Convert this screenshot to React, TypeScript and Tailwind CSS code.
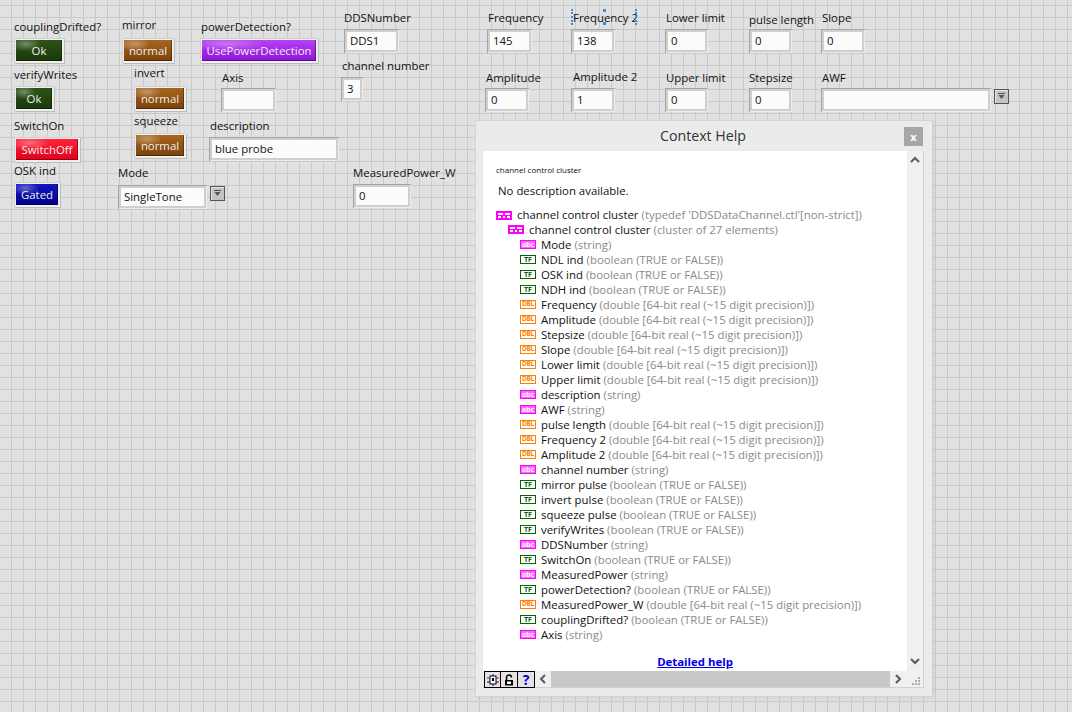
import React from "react";

type Kind = "abc" | "tf" | "dbl" | "cl";

const items: { name: string; kind: Kind; desc: string }[] = [
  { name: "Mode", kind: "abc", desc: "(string)" },
  { name: "NDL ind", kind: "tf", desc: "(boolean (TRUE or FALSE))" },
  { name: "OSK ind", kind: "tf", desc: "(boolean (TRUE or FALSE))" },
  { name: "NDH ind", kind: "tf", desc: "(boolean (TRUE or FALSE))" },
  { name: "Frequency", kind: "dbl", desc: "(double [64-bit real (~15 digit precision)])" },
  { name: "Amplitude", kind: "dbl", desc: "(double [64-bit real (~15 digit precision)])" },
  { name: "Stepsize", kind: "dbl", desc: "(double [64-bit real (~15 digit precision)])" },
  { name: "Slope", kind: "dbl", desc: "(double [64-bit real (~15 digit precision)])" },
  { name: "Lower limit", kind: "dbl", desc: "(double [64-bit real (~15 digit precision)])" },
  { name: "Upper limit", kind: "dbl", desc: "(double [64-bit real (~15 digit precision)])" },
  { name: "description", kind: "abc", desc: "(string)" },
  { name: "AWF", kind: "abc", desc: "(string)" },
  { name: "pulse length", kind: "dbl", desc: "(double [64-bit real (~15 digit precision)])" },
  { name: "Frequency 2", kind: "dbl", desc: "(double [64-bit real (~15 digit precision)])" },
  { name: "Amplitude 2", kind: "dbl", desc: "(double [64-bit real (~15 digit precision)])" },
  { name: "channel number", kind: "abc", desc: "(string)" },
  { name: "mirror pulse", kind: "tf", desc: "(boolean (TRUE or FALSE))" },
  { name: "invert pulse", kind: "tf", desc: "(boolean (TRUE or FALSE))" },
  { name: "squeeze pulse", kind: "tf", desc: "(boolean (TRUE or FALSE))" },
  { name: "verifyWrites", kind: "tf", desc: "(boolean (TRUE or FALSE))" },
  { name: "DDSNumber", kind: "abc", desc: "(string)" },
  { name: "SwitchOn", kind: "tf", desc: "(boolean (TRUE or FALSE))" },
  { name: "MeasuredPower", kind: "abc", desc: "(string)" },
  { name: "powerDetection?", kind: "tf", desc: "(boolean (TRUE or FALSE))" },
  { name: "MeasuredPower_W", kind: "dbl", desc: "(double [64-bit real (~15 digit precision)])" },
  { name: "couplingDrifted?", kind: "tf", desc: "(boolean (TRUE or FALSE))" },
  { name: "Axis", kind: "abc", desc: "(string)" },
];

const btnColors = {
  green:
    "bg-[image:radial-gradient(ellipse_at_22%_20%,rgba(255,255,255,0.35),transparent_30%),linear-gradient(#2c5418,#1b380b)]",
  brown:
    "bg-[image:radial-gradient(ellipse_at_22%_20%,rgba(255,255,255,0.35),transparent_30%),linear-gradient(#a8651c,#7a420a)]",
  red: "bg-[image:radial-gradient(ellipse_at_22%_20%,rgba(255,255,255,0.35),transparent_30%),linear-gradient(#ff2238,#e0001c)]",
  blue: "bg-[image:radial-gradient(ellipse_at_22%_20%,rgba(255,255,255,0.35),transparent_30%),linear-gradient(#1016c0,#00008a)]",
  purple:
    "bg-[image:radial-gradient(ellipse_at_22%_20%,rgba(255,255,255,0.3),transparent_30%),linear-gradient(#b840f4,#8c14d8)]",
};

// label above a control, box below it
const Ctl = ({
  label,
  className = "",
  labelClass = "",
  boxClass = "mt-[3px]",
  children,
}: {
  label: string;
  className?: string;
  labelClass?: string;
  boxClass?: string;
  children: React.ReactNode;
}) => (
  <div className={`flex flex-col items-start ${className}`}>
    <span className={`whitespace-nowrap text-[11.4px] leading-[16px] text-[#111] ${labelClass}`}>{label}</span>
    <div className={`flex items-start gap-[3px] ${boxClass}`}>{children}</div>
  </div>
);

const Field = ({ className, children }: { className: string; children?: React.ReactNode }) => (
  <div className={`bg-[#cfcfcf] p-[3px] shadow-[inset_1px_1px_0_#a4a4a4,inset_-1px_-1px_0_#ececec] ${className}`}>
    <div className="flex h-full items-center bg-[#fbfbfb] pl-[3px] text-[11.4px] text-[#111]">{children}</div>
  </div>
);

const Btn = ({
  className,
  color,
  children,
}: {
  className: string;
  color: keyof typeof btnColors;
  children: React.ReactNode;
}) => (
  <div className={`bg-[#efefef] p-[2px] shadow-[1px_1px_0_#bcbcbc,inset_1px_1px_0_#d0d0d0] ${className}`}>
    <div
      className={`flex h-full items-center justify-center text-[11.4px] text-[#eeeeee] shadow-[inset_-1px_-1px_0_rgba(0,0,0,0.35)] ${btnColors[color]}`}
    >
      {children}
    </div>
  </div>
);

const DropBtn = () => (
  <div className="mt-[1px] flex h-[15px] w-[15px] items-center justify-center border border-[#555] bg-[#c4c4c4] shadow-[inset_1px_1px_0_#e6e6e6]">
    <svg width="9" height="7" viewBox="0 0 9 7">
      <rect x="1" y="0" width="7" height="1" fill="#555" />
      <path d="M1.5 2 L7.5 2 L4.5 6 Z" fill="#555" />
    </svg>
  </div>
);

const TypeIcon = ({ kind }: { kind: Kind }) => {
  if (kind === "cl")
    return (
      <svg width="16" height="9" viewBox="0 0 16 9" className="shrink-0">
        <rect width="16" height="9" fill="#ff00ff" />
        <rect x="2" y="2" width="5" height="2" fill="#fff" />
        <rect x="9" y="2" width="5" height="2" fill="#fff" />
        <rect x="2" y="5" width="3" height="2" fill="#fff" />
        <rect x="7" y="5" width="2" height="2" fill="#fff" />
        <rect x="11" y="5" width="3" height="2" fill="#fff" />
      </svg>
    );
  if (kind === "abc")
    return (
      <span className="flex h-[9px] w-[16px] shrink-0 items-center justify-center border border-[#ff00ff] bg-[#ff66ff] text-[7px] font-bold leading-none text-white">
        abc
      </span>
    );
  if (kind === "tf")
    return (
      <span className="flex h-[9px] w-[16px] shrink-0 items-center justify-center border border-[#006400] bg-white text-[7px] font-bold leading-none text-[#006400]">
        TF
      </span>
    );
  return (
    <span className="flex h-[9px] w-[16px] shrink-0 items-center justify-center border border-[#ff7f00] bg-white text-[6.5px] font-bold leading-none tracking-[-0.3px] text-[#ff7f00]">
      DBL
    </span>
  );
};

const Row = ({ level, kind, name, desc, first }: { level: number; kind: Kind; name: string; desc: string; first?: boolean }) => (
  <div
    className={`flex items-center gap-[5px] whitespace-nowrap text-[11.4px] ${first ? "h-[14px]" : "h-[15px]"} ${
      level === 0 ? "" : level === 1 ? "pl-[12px]" : "pl-[24px]"
    }`}
  >
    <TypeIcon kind={kind} />
    <span className="text-[#111]">{name}</span>
    <span className="-ml-[2px] text-[#8a8a8a]">{desc}</span>
  </div>
);

const Chevron = ({ dir }: { dir: "up" | "down" | "left" | "right" }) => {
  const d = {
    up: "M1 6 L5 2 L9 6",
    down: "M1 2 L5 6 L9 2",
    left: "M6 1 L2 5 L6 9",
    right: "M2 1 L6 5 L2 9",
  }[dir];
  const vert = dir === "up" || dir === "down";
  return (
    <svg width={vert ? 10 : 8} height={vert ? 8 : 10} viewBox={vert ? "0 0 10 8" : "0 0 8 10"}>
      <path d={d} stroke="#5a5a5a" strokeWidth="2" fill="none" />
    </svg>
  );
};

const ContextHelp = () => (
  <div className="absolute left-[475px] top-[120px] flex h-[577px] w-[458px] flex-col border border-[#d4d4d4] bg-[#ebebeb] shadow-[1px_1px_2px_rgba(0,0,0,0.08)]">
    <div className="flex h-[30px] shrink-0 items-center pl-[184px] pr-[9px]">
      <span className="flex-1 text-[14.2px] text-[#333]">Context Help</span>
      <div className="flex h-[19px] w-[19px] items-center justify-center bg-[#a6a6a6] text-[11px] font-bold leading-none text-white">
        x
      </div>
    </div>
    <div className="mb-[8px] ml-[7px] mr-[8px] flex flex-1 flex-col border-b border-r border-[#d0d0d0]">
      <div className="flex flex-1">
        <div className="flex flex-1 flex-col bg-white pl-[13px] pt-[14px]">
          <div className="text-[8px] leading-[10px] text-[#111]">channel control cluster</div>
          <div className="ml-[2px] mt-[8px] text-[11.4px] leading-[16px] text-[#111]">No description available.</div>
          <div className="mt-[9px]">
            <Row level={0} kind="cl" name="channel control cluster" desc="(typedef 'DDSDataChannel.ctl'[non-strict])" first />
            <Row level={1} kind="cl" name="channel control cluster" desc="(cluster of 27 elements)" />
            {items.map((it) => (
              <Row key={it.name} level={2} kind={it.kind} name={it.name} desc={it.desc} />
            ))}
          </div>
          <div className="mt-auto pb-[1px] pr-[13px] text-center text-[11.4px] font-bold leading-[16px] text-[#0000ee] underline">
            Detailed help
          </div>
        </div>
        <div className="flex w-[16px] flex-col items-center justify-between bg-[#f0f0f0] pb-[6px] pt-[5px]">
          <Chevron dir="up" />
          <Chevron dir="down" />
        </div>
      </div>
      <div className="flex h-[16px] items-stretch bg-[#f0f0f0]">
        <div className="ml-[1px] flex">
          <div className="flex h-[17px] w-[17px] items-center justify-center border border-black bg-[#e4e4e4]">
            <svg width="12" height="12" viewBox="0 0 12 12">
              <rect x="3" y="2" width="6" height="8" fill="#fff" stroke="#000" />
              <rect x="5" y="4" width="2" height="3" fill="#000" />
              <path d="M0 4 H3 M9 4 H12" stroke="#e00000" />
              <path d="M0 8 H3 M9 8 H12" stroke="#0000d0" />
              <path d="M6 0 V2 M6 10 V12" stroke="#0000d0" />
            </svg>
          </div>
          <div className="flex h-[17px] w-[17px] items-center justify-center border border-l-0 border-black bg-[#e4e4e4]">
            <svg width="10" height="12" viewBox="0 0 10 12">
              <path d="M2.5 6 V3.5 A2.5 2.5 0 0 1 7.5 3.5" stroke="#000" strokeWidth="1.5" fill="none" />
              <rect x="1" y="6" width="8" height="5.5" fill="#000" />
              <rect x="3" y="7.5" width="4" height="2.5" fill="#fff" />
            </svg>
          </div>
          <div className="flex h-[17px] w-[17px] items-center justify-center border border-l-0 border-black bg-[#e4e4e4] text-[14px] font-bold leading-none text-[#0000e0]">
            ?
          </div>
        </div>
        <div className="flex w-[16px] items-center justify-center">
          <Chevron dir="left" />
        </div>
        <div className="flex-1 bg-[#c8c8c8]" />
        <div className="flex w-[16px] items-center justify-center">
          <Chevron dir="right" />
        </div>
        <div className="flex w-[17px] items-end justify-end pb-[2px] pr-[3px]">
          <svg width="9" height="9" viewBox="0 0 9 9">
            <rect x="7" y="1" width="2" height="2" fill="#aaa" />
            <rect x="4" y="4" width="2" height="2" fill="#aaa" />
            <rect x="7" y="4" width="2" height="2" fill="#aaa" />
            <rect x="1" y="7" width="2" height="2" fill="#aaa" />
            <rect x="4" y="7" width="2" height="2" fill="#aaa" />
            <rect x="7" y="7" width="2" height="2" fill="#aaa" />
          </svg>
        </div>
      </div>
    </div>
  </div>
);

export default function App() {
  return (
    <div className="relative h-[712px] w-[1072px] overflow-hidden bg-[#e1e1e1] bg-[image:linear-gradient(to_right,#c9c9c9_1px,transparent_1px),linear-gradient(to_bottom,#c9c9c9_1px,transparent_1px)] bg-[size:12px_12px] bg-[position:11px_5px] font-['Open_Sans',sans-serif]">
      {/* front panel: controls sit on a free canvas, grouped in columns */}
      <div className="absolute left-[14px] top-[19px] flex flex-col">
        <Ctl label="couplingDrifted?">
          <Btn className="h-[25px] w-[50px]" color="green">Ok</Btn>
        </Ctl>
        <Ctl label="verifyWrites" className="mt-[4px]">
          <Btn className="h-[25px] w-[40px]" color="green">Ok</Btn>
        </Ctl>
        <Ctl label="SwitchOn" className="mt-[7px]">
          <Btn className="h-[25px] w-[66px]" color="red">SwitchOff</Btn>
        </Ctl>
        <Ctl label="OSK ind" className="mt-[1px]">
          <Btn className="h-[25px] w-[46px]" color="blue">Gated</Btn>
        </Ctl>
      </div>

      <div className="absolute left-[118px] top-[17px] flex flex-col">
        <Ctl label="mirror" className="ml-[4px]" boxClass="mt-[5px]">
          <Btn className="h-[25px] w-[52px]" color="brown">normal</Btn>
        </Ctl>
        <Ctl label="invert" className="ml-[16px] mt-[2px]" boxClass="mt-[5px]">
          <Btn className="h-[25px] w-[52px]" color="brown">normal</Btn>
        </Ctl>
        <Ctl label="squeeze" className="ml-[16px] mt-[2px]" boxClass="mt-[4px]">
          <Btn className="h-[25px] w-[52px]" color="brown">normal</Btn>
        </Ctl>
        <Ctl label="Mode" className="mt-[7px]" boxClass="mt-[4px]">
          <Field className="h-[24px] w-[89px]">SingleTone</Field>
          <DropBtn />
        </Ctl>
      </div>

      <div className="absolute left-[200px] top-[19px] flex flex-col">
        <Ctl label="powerDetection?" labelClass="ml-[1px]">
          <Btn className="h-[25px] w-[118px]" color="purple">UsePowerDetection</Btn>
        </Ctl>
        <Ctl label="Axis" className="ml-[21px] mt-[7px]" labelClass="ml-[1px]" boxClass="mt-[2px]">
          <Field className="h-[24px] w-[55px]" />
        </Ctl>
        <Ctl label="description" className="ml-[9px] mt-[6px]" labelClass="ml-[1px]">
          <Field className="h-[24px] w-[130px]">blue probe</Field>
        </Ctl>
      </div>

      <div className="absolute left-[341px] top-[10px] flex flex-col">
        <Ctl label="DDSNumber" className="ml-[3px]">
          <Field className="h-[24px] w-[55px]">DDS1</Field>
        </Ctl>
        <Ctl label="channel number" className="mt-[5px]" labelClass="ml-[1px]">
          <Field className="h-[24px] w-[22px]">3</Field>
        </Ctl>
        <Ctl label="MeasuredPower_W" className="ml-[12px] mt-[64px]">
          <Field className="h-[24px] w-[58px]">0</Field>
        </Ctl>
      </div>

      <div className="absolute left-[485px] top-[10px] grid grid-cols-[86px_94px_84px_72px_auto] gap-y-[17px]">
        <Ctl label="Frequency" labelClass="ml-[3px]">
          <Field className="ml-[2px] h-[24px] w-[45px]">145</Field>
        </Ctl>
        <Ctl label="Frequency 2" labelClass="ml-[2px]">
          <Field className="h-[24px] w-[44px]">138</Field>
        </Ctl>
        <Ctl label="Lower limit" labelClass="ml-[1px]">
          <Field className="h-[24px] w-[43px]">0</Field>
        </Ctl>
        <Ctl label="pulse length" labelClass="mt-[2px]" boxClass="mt-[1px]">
          <Field className="h-[24px] w-[43px]">0</Field>
        </Ctl>
        <Ctl label="Slope" labelClass="ml-[1px]">
          <Field className="h-[24px] w-[44px]">0</Field>
        </Ctl>

        <Ctl label="Amplitude" labelClass="ml-[1px]" boxClass="mt-[2px]">
          <Field className="h-[24px] w-[44px]">0</Field>
        </Ctl>
        <Ctl label="Amplitude 2" labelClass="-mt-[1px] ml-[2px]" boxClass="mt-[3px]">
          <Field className="h-[24px] w-[44px]">1</Field>
        </Ctl>
        <Ctl label="Upper limit" labelClass="ml-[1px]" boxClass="mt-[2px]">
          <Field className="h-[24px] w-[43px]">0</Field>
        </Ctl>
        <Ctl label="Stepsize" boxClass="mt-[2px]">
          <Field className="h-[24px] w-[43px]">0</Field>
        </Ctl>
        <Ctl label="AWF" labelClass="ml-[1px]" boxClass="mt-[2px]">
          <Field className="h-[24px] w-[170px]" />
          <DropBtn />
        </Ctl>
      </div>

      {/* selection handles around the "Frequency 2" label */}
      <div className="absolute left-[571px] top-[9px] flex h-[16px] w-[66px] justify-between">
        <div className="w-[2px] border-l-2 border-dotted border-[#3b8de0]" />
        <div className="flex w-[3px] flex-col justify-between">
          <div className="h-[3px] bg-[#3b8de0]" />
          <div className="h-[3px] bg-[#3b8de0]" />
        </div>
        <div className="w-[2px] border-l-2 border-dotted border-[#3b8de0]" />
      </div>

      <ContextHelp />
    </div>
  );
}
